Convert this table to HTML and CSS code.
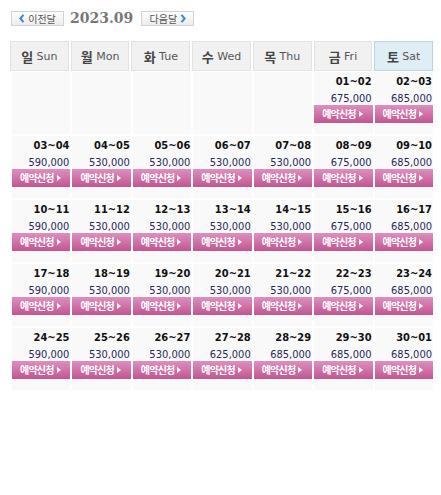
FILE: index.html
```html
<!DOCTYPE html>
<html lang="ko">
<head>
<meta charset="utf-8">
<title>2023.09</title>
<link rel="stylesheet" href="styles.css">
</head>
<body>
<div class="cal">
  <div class="nav">
    <a class="navbtn prev"><svg class="chev" viewBox="0 0 6 9" width="6" height="9"><path d="M4.5 0.8 L1.3 4.5 L4.5 8.2" fill="none" stroke="#3a8bd0" stroke-width="2"/></svg><span>이전달</span></a>
    <span class="title">2023.09</span>
    <a class="navbtn next"><span>다음달</span><svg class="chev" viewBox="0 0 6 9" width="6" height="9"><path d="M1.5 0.8 L4.7 4.5 L1.5 8.2" fill="none" stroke="#3a8bd0" stroke-width="2"/></svg></a>
  </div>
  <div class="head">
    <div class="hd"><b>일</b> Sun</div>
    <div class="hd"><b>월</b> Mon</div>
    <div class="hd"><b>화</b> Tue</div>
    <div class="hd"><b>수</b> Wed</div>
    <div class="hd"><b>목</b> Thu</div>
    <div class="hd"><b>금</b> Fri</div>
    <div class="hd sat"><b>토</b> Sat</div>
  </div>
  <div class="grid">
    <div class="cell"></div>
    <div class="cell"></div>
    <div class="cell"></div>
    <div class="cell"></div>
    <div class="cell"></div>
    <div class="cell"><div class="date">01~02</div><div class="price">675,000</div><a class="book">예약신청<i class="tri"></i></a></div>
    <div class="cell"><div class="date">02~03</div><div class="price">685,000</div><a class="book">예약신청<i class="tri"></i></a></div>

    <div class="cell"><div class="date">03~04</div><div class="price">590,000</div><a class="book">예약신청<i class="tri"></i></a></div>
    <div class="cell"><div class="date">04~05</div><div class="price">530,000</div><a class="book">예약신청<i class="tri"></i></a></div>
    <div class="cell"><div class="date">05~06</div><div class="price">530,000</div><a class="book">예약신청<i class="tri"></i></a></div>
    <div class="cell"><div class="date">06~07</div><div class="price">530,000</div><a class="book">예약신청<i class="tri"></i></a></div>
    <div class="cell"><div class="date">07~08</div><div class="price">530,000</div><a class="book">예약신청<i class="tri"></i></a></div>
    <div class="cell"><div class="date">08~09</div><div class="price">675,000</div><a class="book">예약신청<i class="tri"></i></a></div>
    <div class="cell"><div class="date">09~10</div><div class="price">685,000</div><a class="book">예약신청<i class="tri"></i></a></div>

    <div class="cell"><div class="date">10~11</div><div class="price">590,000</div><a class="book">예약신청<i class="tri"></i></a></div>
    <div class="cell"><div class="date">11~12</div><div class="price">530,000</div><a class="book">예약신청<i class="tri"></i></a></div>
    <div class="cell"><div class="date">12~13</div><div class="price">530,000</div><a class="book">예약신청<i class="tri"></i></a></div>
    <div class="cell"><div class="date">13~14</div><div class="price">530,000</div><a class="book">예약신청<i class="tri"></i></a></div>
    <div class="cell"><div class="date">14~15</div><div class="price">530,000</div><a class="book">예약신청<i class="tri"></i></a></div>
    <div class="cell"><div class="date">15~16</div><div class="price">675,000</div><a class="book">예약신청<i class="tri"></i></a></div>
    <div class="cell"><div class="date">16~17</div><div class="price">685,000</div><a class="book">예약신청<i class="tri"></i></a></div>

    <div class="cell"><div class="date">17~18</div><div class="price">590,000</div><a class="book">예약신청<i class="tri"></i></a></div>
    <div class="cell"><div class="date">18~19</div><div class="price">530,000</div><a class="book">예약신청<i class="tri"></i></a></div>
    <div class="cell"><div class="date">19~20</div><div class="price">530,000</div><a class="book">예약신청<i class="tri"></i></a></div>
    <div class="cell"><div class="date">20~21</div><div class="price">530,000</div><a class="book">예약신청<i class="tri"></i></a></div>
    <div class="cell"><div class="date">21~22</div><div class="price">530,000</div><a class="book">예약신청<i class="tri"></i></a></div>
    <div class="cell"><div class="date">22~23</div><div class="price">675,000</div><a class="book">예약신청<i class="tri"></i></a></div>
    <div class="cell"><div class="date">23~24</div><div class="price">685,000</div><a class="book">예약신청<i class="tri"></i></a></div>

    <div class="cell"><div class="date">24~25</div><div class="price">590,000</div><a class="book">예약신청<i class="tri"></i></a></div>
    <div class="cell"><div class="date">25~26</div><div class="price">530,000</div><a class="book">예약신청<i class="tri"></i></a></div>
    <div class="cell"><div class="date">26~27</div><div class="price">530,000</div><a class="book">예약신청<i class="tri"></i></a></div>
    <div class="cell"><div class="date">27~28</div><div class="price">625,000</div><a class="book">예약신청<i class="tri"></i></a></div>
    <div class="cell"><div class="date">28~29</div><div class="price">685,000</div><a class="book">예약신청<i class="tri"></i></a></div>
    <div class="cell"><div class="date">29~30</div><div class="price">685,000</div><a class="book">예약신청<i class="tri"></i></a></div>
    <div class="cell"><div class="date">30~01</div><div class="price">685,000</div><a class="book">예약신청<i class="tri"></i></a></div>
  </div>
</div>
</body>
</html>
```
FILE: styles.css
```css
html, body {
  margin: 0;
  padding: 0;
  background: #ffffff;
}
body {
  font-family: "DejaVu Sans", "Noto Sans CJK KR", sans-serif;
}
.cal {
  margin-left: 10px;
  width: 423px;
  padding-top: 11px;
}
.nav {
  display: flex;
  align-items: center;
  height: 15px;
  margin-left: 1px;
}
.navbtn {
  box-sizing: border-box;
  width: 53px;
  height: 15px;
  border: 1px solid #d3d3d3;
  background: linear-gradient(#ffffff, #ececec);
  display: flex;
  align-items: center;
  justify-content: center;
  gap: 3px;
  font-family: "Noto Sans CJK KR", sans-serif;
  font-size: 10px;
  color: #555;
  line-height: 13px;
}
.title {
  font-family: "DejaVu Serif", serif;
  font-weight: bold;
  font-size: 14px;
  color: #777;
  margin: 0 8px 0 6px;
  line-height: 15px;
}
.head {
  display: grid;
  grid-template-columns: repeat(7, 1fr);
  gap: 2px;
  margin-top: 15px;
}
.hd {
  box-sizing: border-box;
  height: 30px;
  border: 1px solid #e3e3e3;
  background: #f1f1f1;
  color: #555;
  font-size: 11px;
  display: flex;
  align-items: center;
  justify-content: center;
  white-space: pre;
}
.hd b {
  font-family: "Noto Sans CJK KR", sans-serif;
  font-size: 13px;
  color: #444;
}
.hd.sat {
  background: #deeef4;
  border-color: #b9d5e1;
}
.grid {
  display: grid;
  grid-template-columns: repeat(7, 1fr);
  column-gap: 2px;
  row-gap: 2px;
  margin: 1px 0 0 2px;
}
.cell {
  height: 62px;
  background: #f9f9f9;
  display: flex;
  flex-direction: column;
  align-items: stretch;
  padding-top: 3px;
  box-sizing: border-box;
  font-family: "DejaVu Sans Condensed", "DejaVu Sans", sans-serif;
  font-stretch: condensed;
}
.date {
  text-align: right;
  font-weight: bold;
  font-size: 11px;
  line-height: 13px;
  color: #111;
  padding-right: 1px;
}
.price {
  text-align: right;
  font-size: 11px;
  line-height: 13px;
  color: #252a5a;
  margin-top: 4px;
  padding-right: 1px;
}
.book {
  height: 18px;
  background: linear-gradient(#dc90c0, #c3558f);
  color: #fff;
  font-family: "Noto Sans CJK KR", sans-serif;
  font-weight: bold;
  font-size: 10px;
  letter-spacing: -0.8px;
  line-height: 18px;
  display: flex;
  align-items: center;
  padding-left: 8px;
}
.tri {
  display: inline-block;
  width: 0;
  height: 0;
  border-top: 3.5px solid transparent;
  border-bottom: 3.5px solid transparent;
  border-left: 4px solid #fff;
  margin-left: 3px;
}
```
